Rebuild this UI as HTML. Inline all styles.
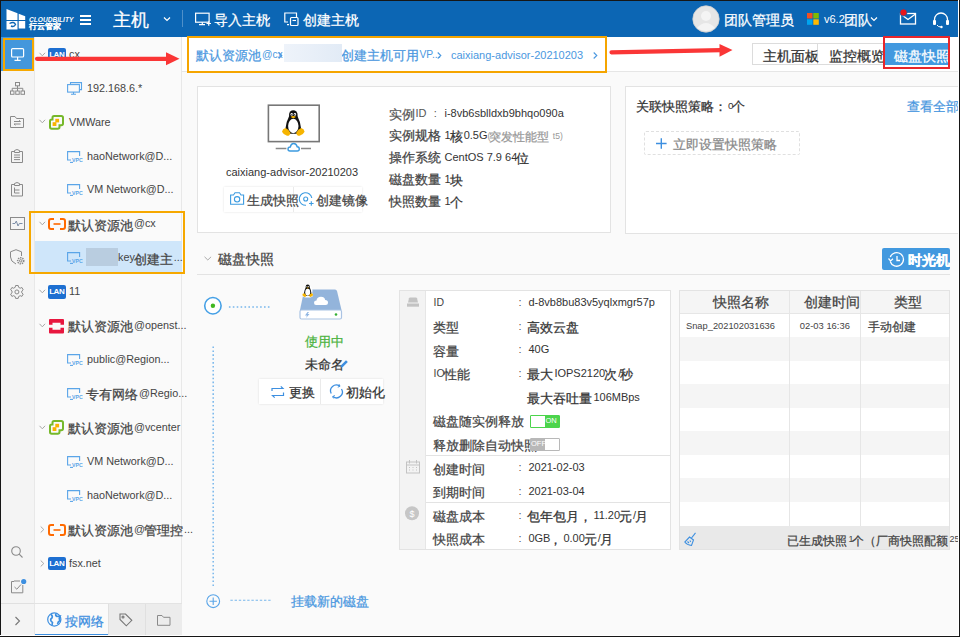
<!DOCTYPE html>
<html><head><meta charset="utf-8"><style>
*{box-sizing:border-box;margin:0;padding:0}
html,body{width:960px;height:637px;overflow:hidden}
body{position:relative;background:#fafafa;font-family:"Liberation Sans",sans-serif;color:#333;font-size:12px}
.a{position:absolute;white-space:nowrap}
.t{line-height:16px;height:16px}
svg{position:absolute;overflow:visible}
.hw{color:#fff;font-size:11px;--cf:14px}
.tr{font-size:10.8px;color:#444;line-height:16px;height:16px}
.lan{position:absolute;width:17.5px;height:13.5px;background:#1d6fd1;border-radius:2px;color:#fff;font-size:8px;font-weight:bold;line-height:13.5px;text-align:center;letter-spacing:-0.4px}
.c{font-size:var(--cf,13px);-webkit-text-stroke:0.25px currentColor;position:relative;top:2.3px;left:-1px;line-height:0}
.card{position:absolute;background:#fff;border:1px solid #e3e3e3}
.lbl{font-size:11px;color:#555;line-height:16px;height:16px}
.val{font-size:11px;color:#333;line-height:16px;height:16px}
</style></head><body>
<div class="a" style="left:0;top:0;width:960px;height:37px;background:#0c66b4"></div>
<svg style="left:0;top:0" width="80" height="37">
 <polygon points="6.5,9 17.5,13.2 17.5,20 6.5,20" fill="#fff"/>
 <polygon points="18.7,13.8 25.2,16.3 25.2,20 18.7,20" fill="#fff"/>
 <rect x="6.5" y="21" width="11" height="8.5" fill="#fff"/>
 <rect x="18.7" y="21" width="6.5" height="7.5" fill="#fff"/>
 <path d="M9.5,23.5 Q14,21 15.5,24.5 Q14,27.5 11,26" stroke="#0c66b4" stroke-width="1.4" fill="none"/>
 <text x="29" y="21.6" font-family="Liberation Sans" font-weight="bold" font-style="italic" font-size="6.6" fill="#fff" letter-spacing="0">CLOUDBILITY</text>
 <text x="28.6" y="28.6" font-family="Liberation Sans" font-size="8" fill="#fff" stroke="#fff" stroke-width="0.5">行云管家</text>
</svg>
<div class="a" style="left:80px;top:15px;width:11px;height:2px;background:#fff"></div>
<div class="a" style="left:80px;top:19px;width:11px;height:2px;background:#fff"></div>
<div class="a" style="left:80px;top:23px;width:11px;height:2px;background:#fff"></div>
<div class="a" style="left:114px;top:11px;height:18px;line-height:18px;font-size:13.5px;color:#fff;--cf:18px"><span class="c">主机</span></div>
<svg style="left:163px;top:16px" width="8" height="6"><path d="M1,1.5 L4,4.5 L7,1.5" stroke="#fff" stroke-width="1.2" fill="none"/></svg>
<div class="a" style="left:182px;top:10px;width:1px;height:17px;background:rgba(255,255,255,0.28)"></div>
<svg style="left:195px;top:12px" width="17" height="14"><rect x="0.6" y="1.2" width="13.5" height="9" fill="none" stroke="#fff" stroke-width="1.2"/><path d="M4,12.6 H10 M7.3,10.2 V12.6" stroke="#fff" stroke-width="1.2"/><path d="M11.5,11.5 H16 M13.75,9.25 V13.75" stroke="#fff" stroke-width="1.2"/></svg>
<div class="a hw t" style="left:215px;top:11px"><span class="c">导入主机</span></div>
<svg style="left:263px;top:16px" width="8" height="6"><path d="M1,1.5 L4,4.5 L7,1.5" stroke="#fff" stroke-width="1.2" fill="none"/></svg>
<svg style="left:284px;top:12px" width="16" height="14"><path d="M12.5,5 V1 H0.8 V10 H4" fill="none" stroke="#fff" stroke-width="1.2"/><path d="M3,12.6 H5" stroke="#fff" stroke-width="1.2"/><rect x="6.5" y="5.5" width="7.5" height="8" rx="1" fill="none" stroke="#fff" stroke-width="1.2"/><path d="M8.5,8.5 H12" stroke="#fff" stroke-width="1.1"/></svg>
<div class="a hw t" style="left:304px;top:11px"><span class="c">创建主机</span></div>
<svg style="left:351px;top:16px" width="8" height="6"><path d="M1,1.5 L4,4.5 L7,1.5" stroke="#fff" stroke-width="1.2" fill="none"/></svg>
<svg style="left:692px;top:5px" width="28" height="28"><circle cx="14" cy="14" r="13.2" fill="#e6e6e6" stroke="#d0d0d0" stroke-width="0.8"/><circle cx="14" cy="11" r="5" fill="#f4f4f4"/><path d="M5,23 Q14,13 23,23 Q14,29 5,23Z" fill="#f4f4f4"/></svg>
<div class="a hw t" style="left:725px;top:11px"><span class="c">团队管理员</span></div>
<svg style="left:785px;top:16px" width="8" height="6"><path d="M1,1.5 L4,4.5 L7,1.5" stroke="#fff" stroke-width="1.2" fill="none"/></svg>
<svg style="left:807px;top:13px" width="12" height="12"><rect x="0" y="0" width="5.5" height="5.5" fill="#f25022"/><rect x="6.3" y="0" width="5.5" height="5.5" fill="#7fba00"/><rect x="0" y="6.3" width="5.5" height="5.5" fill="#00a4ef"/><rect x="6.3" y="6.3" width="5.5" height="5.5" fill="#ffb900"/></svg>
<div class="a hw t" style="left:824px;top:11px">v6.2<span class="c">团队</span></div>
<svg style="left:870px;top:16px" width="8" height="6"><path d="M1,1.5 L4,4.5 L7,1.5" stroke="#fff" stroke-width="1.2" fill="none"/></svg>
<svg style="left:899px;top:8px" width="20" height="18"><rect x="1.5" y="5.5" width="15" height="10.5" fill="none" stroke="#fff" stroke-width="1.3"/><path d="M1.5,6 L9,11.5 L16.5,6" fill="none" stroke="#fff" stroke-width="1.3"/><circle cx="4.5" cy="4.5" r="3.6" fill="#e8141b" stroke="#0c66b4" stroke-width="0.8"/></svg>
<svg style="left:931px;top:11px" width="20" height="18"><path d="M3.5,10 V8.5 A6.5,6.5 0 0 1 16.5,8.5 V10" fill="none" stroke="#fff" stroke-width="1.3"/><rect x="2" y="9" width="3" height="5" rx="1" fill="#fff"/><rect x="15" y="9" width="3" height="5" rx="1" fill="#fff"/><path d="M6,14 Q7,16 10,16" fill="none" stroke="#fff" stroke-width="1"/><circle cx="10.5" cy="16" r="1.2" fill="#fff"/></svg>
<div class="a" style="left:0;top:37px;width:35px;height:600px;background:#f4f4f4;border-right:1px solid #e8e8e8"></div>
<div class="a" style="left:1px;top:37px;width:33px;height:34px;background:#4497dc"></div>
<div class="a" style="left:3px;top:37.5px;width:31px;height:33.5px;border:2.3px solid #f6a800"></div>
<svg style="left:11px;top:48px" width="14" height="14"><rect x="0.6" y="0.6" width="12" height="8.4" rx="1" fill="none" stroke="#fff" stroke-width="1.2"/><path d="M6.6,9 V12 M3.5,12.3 H9.7" stroke="#fff" stroke-width="1.2"/></svg>
<svg style="left:10px;top:82px" width="15" height="14" fill="none" stroke="#8a8a8a" stroke-width="1"><rect x="5.5" y="0.5" width="4" height="3.3"/><path d="M7.5,3.8 V6.3 M2.2,9 V6.3 H12.8 V9 M7.5,6.3 V9"/><rect x="0.5" y="9" width="3.5" height="3.3"/><rect x="5.75" y="9" width="3.5" height="3.3"/><rect x="11" y="9" width="3.5" height="3.3"/></svg>
<svg style="left:10px;top:116px" width="15" height="13" fill="none" stroke="#8a8a8a" stroke-width="1"><path d="M0.5,0.5 H5 L6.5,2.5 H13.5 V11.5 H0.5 Z"/><path d="M4,5.5 H10.5 L9,4.3 M10.5,8 H4 L5.5,9.2"/></svg>
<svg style="left:11px;top:149px" width="13" height="15" fill="none" stroke="#8a8a8a" stroke-width="1"><path d="M3.5,2.5 H0.5 V13.5 H11.5 V2.5 H8.5"/><path d="M3.5,3.5 V1.5 Q6,-0.5 8.5,1.5 V3.5 Z"/><path d="M3,6 H9 M3,8.3 H9 M3,10.6 H9"/></svg>
<svg style="left:11px;top:182px" width="13" height="15" fill="none" stroke="#8a8a8a" stroke-width="1"><path d="M3.5,2.5 H0.5 V14 H11.5 V2.5 H8.5"/><path d="M3.5,3.5 V1.5 Q6,-0.5 8.5,1.5 V3.5 Z"/><path d="M3.5,5.5 V11 H8.5 M3.5,8 H8.5"/></svg>
<svg style="left:10px;top:217px" width="15" height="13" fill="none" stroke="#8a8a8a" stroke-width="1"><rect x="0.5" y="0.5" width="14" height="12"/><path d="M2.5,6.5 H5 L6.3,4 L8,9 L9.3,6.5 H12.5" stroke="#7d8fa8"/></svg>
<svg style="left:10px;top:249px" width="15" height="17" fill="none" stroke="#8a8a8a" stroke-width="1"><path d="M6,0.7 L11.5,2.8 V7 M6,0.7 L0.5,2.8 V8 Q0.5,12.5 6,15"/><circle cx="10.7" cy="11.8" r="3" stroke-width="1.6" stroke-dasharray="1.3 0.9"/><circle cx="10.7" cy="11.8" r="1.2"/></svg>
<svg style="left:10px;top:285px" width="14" height="14" fill="none" stroke="#8a8a8a" stroke-width="1"><path d="M5.6,0.5 H8.2 L8.6,2.3 L10.2,3.2 L11.9,2.5 L13.2,4.8 L11.8,6 V7.9 L13.2,9.1 L11.9,11.4 L10.2,10.7 L8.6,11.6 L8.2,13.4 H5.6 L5.2,11.6 L3.6,10.7 L1.9,11.4 L0.6,9.1 L2,7.9 V6 L0.6,4.8 L1.9,2.5 L3.6,3.2 L5.2,2.3 Z"/><circle cx="6.9" cy="6.95" r="2"/></svg>
<svg style="left:11px;top:546px" width="13" height="13" fill="none" stroke="#8a8a8a" stroke-width="1.1"><circle cx="5" cy="5" r="4.3"/><path d="M8.2,8.2 L11.5,11.5"/></svg>
<svg style="left:11px;top:579px" width="15" height="15" fill="none" stroke="#8a8a8a" stroke-width="1"><path d="M3,2.5 H0.5 V13.8 H11.8 V6"/><path d="M3,2 H9" /><path d="M3.5,8 L5.8,10.2 L10,5.5"/><circle cx="12.7" cy="2.5" r="2.6" fill="#3d8fe0" stroke="none"/></svg>
<div class="a" style="left:0;top:603px;width:34px;height:1px;background:#e0e0e0"></div>
<svg style="left:14px;top:616px" width="8" height="10" fill="none" stroke="#777" stroke-width="1.1"><path d="M1.5,1 L5.5,5 L1.5,9"/></svg>
<div class="a" style="left:35px;top:37px;width:147px;height:600px;background:#fafafa;border-right:1px solid #e8e8e8"></div>
<div class="a" style="left:34.5px;top:241px;width:147px;height:31.6px;background:#cfe6fa"></div>
<div class="a" style="left:86.4px;top:248px;width:32px;height:18px;background:#b9cde0"></div>
<div class="a" style="left:28.5px;top:211px;width:156.5px;height:63px;border:2.3px solid #f6a800"></div>
<svg style="left:39px;top:51.5px" width="7" height="5" fill="none" stroke="#a8a8a8" stroke-width="1"><path d="M0.5,0.8 L3.3,3.8 L6.1,0.8"/></svg>
<div class="lan" style="left:48px;top:47.8px">LAN</div>
<div class="a tr" style="left:69px;top:45.7px;">cx</div>
<svg style="left:67px;top:82.2px" width="16" height="13" fill="none" stroke="#5aa5e8" stroke-width="1.1"><path d="M3.5,2.5 V0.6 H14.5 V7.6 H12.5"/><rect x="0.6" y="2.6" width="11.8" height="7.5"/><path d="M6.5,10.1 V12 M4,12.2 H9"/></svg>
<div class="a tr" style="left:87px;top:79.6px;">192.168.6.*</div>
<svg style="left:39px;top:119.4px" width="7" height="5" fill="none" stroke="#a8a8a8" stroke-width="1"><path d="M0.5,0.8 L3.3,3.8 L6.1,0.8"/></svg>
<svg style="left:49px;top:115.1px" width="16" height="15"><path d="M5,1 H12.3 Q14,1 14,2.7 V8.5 Q14,10.2 12.3,10.2 H10.5 V12 Q10.5,13.8 8.8,13.8 H2.7 Q1,13.8 1,12 V6.3 Q1,4.6 2.7,4.6 H3.5 V2.7 Q3.5,1 5,1 Z" fill="none" stroke="#76b82a" stroke-width="2"/><rect x="6.3" y="3.8" width="3.8" height="3.6" fill="#f8b300"/><rect x="3.6" y="7.2" width="3.8" height="3.8" fill="#f8b300"/></svg>
<div class="a tr" style="left:69px;top:113.6px;">VMWare</div>
<svg style="left:67px;top:150.5px" width="16" height="12" fill="none" stroke="#5aa5e8" stroke-width="1.1"><path d="M4,9 H0.6 V0.6 H12.6 V5"/><path d="M3,11.4 H6"/><text x="5" y="10.6" font-family="Liberation Sans" font-size="5.2" fill="#5aa5e8" stroke="none" font-weight="bold">VPC</text></svg>
<div class="a tr" style="left:87px;top:147.5px;">haoNetwork@D...</div>
<svg style="left:67px;top:184.4px" width="16" height="12" fill="none" stroke="#5aa5e8" stroke-width="1.1"><path d="M4,9 H0.6 V0.6 H12.6 V5"/><path d="M3,11.4 H6"/><text x="5" y="10.6" font-family="Liberation Sans" font-size="5.2" fill="#5aa5e8" stroke="none" font-weight="bold">VPC</text></svg>
<div class="a tr" style="left:87px;top:181.4px;">VM Network@D...</div>
<svg style="left:39px;top:221.2px" width="7" height="5" fill="none" stroke="#a8a8a8" stroke-width="1"><path d="M0.5,0.8 L3.3,3.8 L6.1,0.8"/></svg>
<svg style="left:48px;top:218.3px" width="18" height="12" fill="none" stroke="#ff6a00" stroke-width="2"><path d="M6,1 H3 Q1,1 1,3 V9 Q1,11 3,11 H6 M12,1 H15 Q17,1 17,3 V9 Q17,11 15,11 H12"/><path d="M5.5,6 H12.5" stroke-width="1.6"/></svg>
<div class="a tr" style="left:69px;top:215.3px;"><span class="c">默认资源池</span>@cx</div>
<svg style="left:67px;top:252.3px" width="16" height="12" fill="none" stroke="#5aa5e8" stroke-width="1.1"><path d="M4,9 H0.6 V0.6 H12.6 V5"/><path d="M3,11.4 H6"/><text x="5" y="10.6" font-family="Liberation Sans" font-size="5.2" fill="#5aa5e8" stroke="none" font-weight="bold">VPC</text></svg>
<div class="a tr" style="left:87px;top:249.3px;"></div>
<svg style="left:39px;top:289.0px" width="7" height="5" fill="none" stroke="#a8a8a8" stroke-width="1"><path d="M0.5,0.8 L3.3,3.8 L6.1,0.8"/></svg>
<div class="lan" style="left:48px;top:285.3px">LAN</div>
<div class="a tr" style="left:69px;top:283.2px;">11</div>
<svg style="left:39px;top:322.9px" width="7" height="5" fill="none" stroke="#a8a8a8" stroke-width="1"><path d="M0.5,0.8 L3.3,3.8 L6.1,0.8"/></svg>
<svg style="left:49px;top:318.7px" width="15" height="15"><path d="M0,1 Q0,0 1,0 H14 Q15,0 15,1 V5.8 H11.5 V3.8 H3.5 V5.8 H0 Z M0,8.8 H3.5 V10.8 H11.5 V8.8 H15 V13.5 Q15,14.5 14,14.5 H1 Q0,14.5 0,13.5 Z" fill="#e8173f"/></svg>
<div class="a tr" style="left:69px;top:317.1px;"><span class="c">默认资源池</span>@openst...</div>
<svg style="left:67px;top:354.1px" width="16" height="12" fill="none" stroke="#5aa5e8" stroke-width="1.1"><path d="M4,9 H0.6 V0.6 H12.6 V5"/><path d="M3,11.4 H6"/><text x="5" y="10.6" font-family="Liberation Sans" font-size="5.2" fill="#5aa5e8" stroke="none" font-weight="bold">VPC</text></svg>
<div class="a tr" style="left:87px;top:351.1px;">public@Region...</div>
<svg style="left:67px;top:388.0px" width="16" height="12" fill="none" stroke="#5aa5e8" stroke-width="1.1"><path d="M4,9 H0.6 V0.6 H12.6 V5"/><path d="M3,11.4 H6"/><text x="5" y="10.6" font-family="Liberation Sans" font-size="5.2" fill="#5aa5e8" stroke="none" font-weight="bold">VPC</text></svg>
<div class="a tr" style="left:87px;top:385.0px;"><span class="c">专有网络</span>@Regio...</div>
<svg style="left:39px;top:424.7px" width="7" height="5" fill="none" stroke="#a8a8a8" stroke-width="1"><path d="M0.5,0.8 L3.3,3.8 L6.1,0.8"/></svg>
<svg style="left:49px;top:420.4px" width="16" height="15"><path d="M5,1 H12.3 Q14,1 14,2.7 V8.5 Q14,10.2 12.3,10.2 H10.5 V12 Q10.5,13.8 8.8,13.8 H2.7 Q1,13.8 1,12 V6.3 Q1,4.6 2.7,4.6 H3.5 V2.7 Q3.5,1 5,1 Z" fill="none" stroke="#76b82a" stroke-width="2"/><rect x="6.3" y="3.8" width="3.8" height="3.6" fill="#f8b300"/><rect x="3.6" y="7.2" width="3.8" height="3.8" fill="#f8b300"/></svg>
<div class="a tr" style="left:69px;top:418.9px;"><span class="c">默认资源池</span>@vcenter</div>
<svg style="left:67px;top:455.9px" width="16" height="12" fill="none" stroke="#5aa5e8" stroke-width="1.1"><path d="M4,9 H0.6 V0.6 H12.6 V5"/><path d="M3,11.4 H6"/><text x="5" y="10.6" font-family="Liberation Sans" font-size="5.2" fill="#5aa5e8" stroke="none" font-weight="bold">VPC</text></svg>
<div class="a tr" style="left:87px;top:452.9px;">VM Network@D...</div>
<svg style="left:67px;top:489.8px" width="16" height="12" fill="none" stroke="#5aa5e8" stroke-width="1.1"><path d="M4,9 H0.6 V0.6 H12.6 V5"/><path d="M3,11.4 H6"/><text x="5" y="10.6" font-family="Liberation Sans" font-size="5.2" fill="#5aa5e8" stroke="none" font-weight="bold">VPC</text></svg>
<div class="a tr" style="left:87px;top:486.8px;">haoNetwork@D...</div>
<svg style="left:40px;top:526.0px" width="5" height="7" fill="none" stroke="#a8a8a8" stroke-width="1"><path d="M0.7,0.5 L3.8,3.5 L0.7,6.5"/></svg>
<svg style="left:48px;top:523.7px" width="18" height="12" fill="none" stroke="#ff6a00" stroke-width="2"><path d="M6,1 H3 Q1,1 1,3 V9 Q1,11 3,11 H6 M12,1 H15 Q17,1 17,3 V9 Q17,11 15,11 H12"/><path d="M5.5,6 H12.5" stroke-width="1.6"/></svg>
<div class="a tr" style="left:69px;top:520.7px;"><span class="c">默认资源池</span>@<span class="c">管理控</span>...</div>
<svg style="left:40px;top:560.0px" width="5" height="7" fill="none" stroke="#a8a8a8" stroke-width="1"><path d="M0.7,0.5 L3.8,3.5 L0.7,6.5"/></svg>
<div class="lan" style="left:48px;top:556.8px">LAN</div>
<div class="a tr" style="left:69px;top:554.7px;">fsx.net</div>
<div class="a tr" style="left:118px;top:249.3px;">key<span class="c">创建主</span>...</div>
<div class="a" style="left:34px;top:603px;width:148px;height:1px;background:#e3e3e3"></div>
<div class="a" style="left:34.5px;top:604px;width:73.5px;height:32px;background:#fafafa"></div>
<div class="a" style="left:108px;top:604px;width:36.5px;height:32px;background:#ececec;border-left:1px solid #e0e0e0"></div>
<div class="a" style="left:144.5px;top:604px;width:37px;height:32px;background:#ececec;border-left:1px solid #e0e0e0"></div>
<div class="a" style="left:34.5px;top:633.5px;width:73.5px;height:2px;background:#3d8fe0"></div>
<svg style="left:47px;top:612px" width="15" height="15"><circle cx="7.3" cy="7.5" r="6.6" fill="none" stroke="#3d8fe0" stroke-width="1.2"/><path d="M4,2.5 Q6,4 5,6 Q3,7 4,9 L5.5,10.5 L5,13 M9,1.5 Q8,3.5 10,4.5 L13,4 Q11.5,6.5 13,8.5 Q11,9.5 10.5,12" fill="none" stroke="#3d8fe0" stroke-width="1.6"/></svg>
<div class="a" style="left:66px;top:612px;line-height:16px;font-size:11px;color:#3d8fe0"><span class="c">按网络</span></div>
<svg style="left:119px;top:613px" width="14" height="15" fill="none" stroke="#777" stroke-width="1.1"><path d="M1,1 H6.5 L12.8,7.3 L7.3,12.8 L1,6.5 Z"/><circle cx="4" cy="4" r="1"/></svg>
<svg style="left:157px;top:615px" width="14" height="11" fill="none" stroke="#8a8a8a" stroke-width="1"><path d="M0.5,0.5 H5 L6.5,2.3 H13 V10.3 H0.5 Z"/></svg>
<div class="a" style="left:182px;top:37px;width:778px;height:35px;background:#fff;border-bottom:1px solid #e6e6e6"></div>
<div class="a" style="left:186.5px;top:35.5px;width:420px;height:37px;border:2.2px solid #f5a500"></div>
<div class="a tr" style="left:197px;top:47.0px;color:#4b98e0;font-size:10.3px"><span class="c">默认资源池</span>@cx</div>
<svg style="left:277.5px;top:51.5px" width="5" height="7" fill="none" stroke="#4b98e0" stroke-width="1.1"><path d="M0.7,0.5 L3.8,3.5 L0.7,6.5"/></svg>
<div class="a tr" style="left:341.5px;top:46.6px;color:#4b98e0;font-size:10.3px"><span class="c">创建主机可用</span>VP...</div>
<div class="a" style="left:283.6px;top:44.2px;width:58.4px;height:18.3px;background:linear-gradient(90deg,#eef3fa,#e2ebf6)"></div>
<svg style="left:436.5px;top:51.5px" width="5" height="7" fill="none" stroke="#4b98e0" stroke-width="1.1"><path d="M0.7,0.5 L3.8,3.5 L0.7,6.5"/></svg>
<div class="a tr" style="left:451px;top:47.0px;color:#4b98e0;font-size:11px">caixiang-advisor-20210203</div>
<svg style="left:592.5px;top:51.5px" width="5" height="7" fill="none" stroke="#4b98e0" stroke-width="1.1"><path d="M0.7,0.5 L3.8,3.5 L0.7,6.5"/></svg>
<svg style="left:0;top:0" width="960" height="100"><path d="M37,58.8 H168" stroke="#fa3636" stroke-width="4.2" stroke-linecap="round"/><polygon points="166,52.3 179.5,58.8 166,65.2" fill="#fa3636"/><path d="M611.5,52.3 L721,50.1" stroke="#fa3636" stroke-width="4.2" stroke-linecap="round"/><polygon points="719.5,44 732.5,50.1 719.5,56.7" fill="#fa3636"/></svg>
<div class="a" style="left:751.5px;top:43.3px;width:66.5px;height:22.2px;background:#fff;border:1px solid #dcdcdc"></div>
<div class="a" style="left:817.5px;top:43.3px;width:66.5px;height:22.2px;background:#fff;border:1px solid #dcdcdc;border-left:none"></div>
<div class="a" style="left:884px;top:43.3px;width:64.5px;height:22.2px;background:#4299df"></div>
<div class="a tr" style="left:763.5px;top:46.5px;color:#333;font-size:11px;--cf:14px"><span class="c">主机面板</span></div>
<div class="a tr" style="left:829.5px;top:46.5px;color:#333;font-size:11px;--cf:14px"><span class="c">监控概览</span></div>
<div class="a tr" style="left:894.5px;top:46.5px;color:#fff;font-size:11px;--cf:14px"><span class="c">磁盘快照</span></div>
<div class="a" style="left:882.8px;top:35.7px;width:67px;height:33.5px;border:2px solid #e8262b"></div>
<div class="card" style="left:197px;top:86.3px;width:413.5px;height:147px"></div>
<svg style="left:267px;top:103.5px" width="54" height="50">
<rect x="1.4" y="1.2" width="50.8" height="36.4" fill="#fff" stroke="#777" stroke-width="1.6"/>
<path d="M8.7,44.5 H19.4 M34,44.5 H44" stroke="#888" stroke-width="1.3"/>
<path d="M23,47 Q21,47 21,45 Q21,43 23.3,43 Q24,39.5 26.6,39.5 Q29.5,39.5 30.2,42.8 Q32.3,43 32.3,45 Q32.3,47 30.3,47 Z" fill="#fff" stroke="#3d9be0" stroke-width="1.4"/>
<g transform="translate(15,6.2)"><path d="M7.3,5.5 Q4.2,11.5 3.6,17.5 Q3.6,22.5 6.5,23.5 L16.1,23.5 Q19,22.5 19,17.5 Q18.4,11.5 15.3,5.5 Z" fill="#111"/>
 <ellipse cx="11.3" cy="4.7" rx="4.3" ry="4.7" fill="#111"/>
 <ellipse cx="11.3" cy="15.8" rx="5.2" ry="7.2" fill="#fff"/>
 <ellipse cx="9.7" cy="4.2" rx="1.2" ry="1.4" fill="#fff"/><ellipse cx="12.9" cy="4.2" rx="1.2" ry="1.4" fill="#fff"/>
 <circle cx="9.9" cy="4.5" r="0.6" fill="#111"/><circle cx="12.7" cy="4.5" r="0.6" fill="#111"/>
 <path d="M8.6,6.6 Q11.3,5.2 14,6.6 Q11.3,9.3 8.6,6.6Z" fill="#f6b400"/>
 <path d="M0,21.5 Q0.5,18.5 3.5,17.8 Q6.5,19 8.5,22.5 Q8,25.8 5,25.6 Q1,24 0,21.5Z" fill="#f6b400"/>
 <path d="M22.6,21.5 Q22.1,18.5 19.1,17.8 Q16.1,19 14.1,22.5 Q14.6,25.8 17.6,25.6 Q21.6,24 22.6,21.5Z" fill="#f6b400"/></g>
</svg>
<div class="a tr" style="left:226px;top:163.7px;color:#333;font-size:11px">caixiang-advisor-20210203</div>
<div class="a" style="left:224px;top:186.8px;width:138px;height:25.2px;background:#fff;box-shadow:0 0 2px rgba(0,0,0,0.12)"></div>
<div class="a" style="left:292.5px;top:187px;width:1px;height:25px;background:#eaeaea"></div>
<svg style="left:229.5px;top:192px" width="15" height="13" fill="none" stroke="#3d9be0" stroke-width="1.1"><path d="M0.6,3 H3.5 L5,0.8 H9.5 L11,3 H13.6 V12.2 H0.6 Z"/><circle cx="7.1" cy="7.3" r="2.7"/></svg>
<div class="a tr" style="left:248.3px;top:191.5px;color:#444;font-size:10px"><span class="c">生成快照</span></div>
<svg style="left:298.5px;top:192px" width="16" height="15" fill="none" stroke="#3d9be0" stroke-width="1.1"><path d="M12.8,6 A6.3,6.3 0 1 0 7,13.3"/><circle cx="6.7" cy="7" r="2"/><path d="M10,11.5 H14.6 M12.3,9.2 V13.8"/></svg>
<div class="a tr" style="left:317px;top:191.5px;color:#444;font-size:10px"><span class="c">创建镜像</span></div>
<div class="a lbl" style="left:389.5px;top:105.0px;font-size:11px;color:#555"><span class="c">实例</span>ID</div>
<div class="a lbl" style="left:433.8px;top:105.0px;font-size:11px;color:#555">:</div>
<div class="a val" style="left:444.5px;top:105.0px;font-size:11px;color:#333">i-8vb6sblldxb9bhqo090a</div>
<div class="a lbl" style="left:389.5px;top:126.9px;font-size:10.3px;color:#444"><span class="c">实例规格</span></div>
<div class="a lbl" style="left:433.8px;top:126.9px;font-size:11px;color:#555">:</div>
<div class="a val" style="left:444.5px;top:126.9px;font-size:11px;color:#333">1<span class="c">核</span>0.5G<span style="font-size:8.6px;color:#999;--cf:12px">(<span class="c">突发性能型</span> t5)</span></div>
<div class="a lbl" style="left:389.5px;top:148.9px;font-size:10.3px;color:#444"><span class="c">操作系统</span></div>
<div class="a lbl" style="left:433.8px;top:148.9px;font-size:11px;color:#555">:</div>
<div class="a val" style="left:444.5px;top:148.9px;font-size:11px;color:#333">CentOS 7.9 64<span class="c">位</span></div>
<div class="a lbl" style="left:389.5px;top:170.8px;font-size:10.3px;color:#444"><span class="c">磁盘数量</span></div>
<div class="a lbl" style="left:433.8px;top:170.8px;font-size:11px;color:#555">:</div>
<div class="a val" style="left:444.5px;top:170.8px;font-size:11px;color:#333">1<span class="c">块</span></div>
<div class="a lbl" style="left:389.5px;top:192.8px;font-size:10.3px;color:#444"><span class="c">快照数量</span></div>
<div class="a lbl" style="left:433.8px;top:192.8px;font-size:11px;color:#555">:</div>
<div class="a val" style="left:444.5px;top:192.8px;font-size:11px;color:#333">1<span class="c">个</span></div>
<div class="card" style="left:625.3px;top:86.4px;width:335px;height:147.6px"></div>
<div class="a tr" style="left:637px;top:97.5px;color:#333;font-size:9.85px"><span class="c">关联快照策略：</span>0<span class="c">个</span></div>
<div class="a tr" style="left:907.5px;top:97.5px;color:#4b98e0;font-size:10.3px"><span class="c">查看全部</span></div>
<div class="a" style="left:644px;top:131.3px;width:155.5px;height:23.7px;border:1px dashed #e0e0e0;border-radius:2px"></div>
<svg style="left:656px;top:138px" width="12" height="12" stroke="#3d8fe0" stroke-width="1.4"><path d="M5.3,0.3 V10.8 M0,5.5 H10.6"/></svg>
<div class="a tr" style="left:674px;top:135.7px;color:#888;font-size:9.9px"><span class="c">立即设置快照策略</span></div>
<svg style="left:204px;top:256px" width="8" height="5" fill="none" stroke="#aaa" stroke-width="1"><path d="M0.5,0.8 L3.8,4 L7.1,0.8"/></svg>
<div class="a tr" style="left:218.7px;top:250.0px;color:#444;font-size:10.5px;--cf:14px"><span class="c">磁盘快照</span></div>
<div class="a" style="left:197px;top:274px;width:753px;height:1px;background:#e3e3e3"></div>
<div class="a" style="left:882px;top:247.7px;width:67.7px;height:22px;background:#4299df;border-radius:2px"></div>
<svg style="left:888px;top:251.5px" width="17" height="15" fill="none" stroke="#fff" stroke-width="1.3"><path d="M2.3,5 A6.8,6.8 0 1 1 2.2,9.5"/><path d="M0.5,6.5 L2.6,9 L5,6.8" stroke-width="1.2"/><path d="M9,4 V8.5 H12"/></svg>
<div class="a tr" style="left:908.5px;top:250.7px;color:#fff;font-size:10.8px;font-weight:bold;--cf:14px"><span class="c">时光机</span></div>
<svg style="left:203px;top:296px" width="20" height="20"><circle cx="9.9" cy="9.75" r="8.2" fill="#fff" stroke="#45a0e6" stroke-width="1.6"/><circle cx="9.9" cy="9.75" r="2.2" fill="#3fb71f"/></svg>
<svg style="left:0;top:0" width="300" height="620"><path d="M228.9,307 H271" stroke="#78b7ec" stroke-width="1.6" stroke-dasharray="1.6 2.3"/><path d="M213.2,346.5 V586" stroke="#78b7ec" stroke-width="1.5" stroke-dasharray="1.6 2.3"/><path d="M230.4,600.3 H271" stroke="#78b7ec" stroke-width="1.1" stroke-dasharray="2.4 1.8"/></svg>
<svg style="left:299px;top:284px" width="45" height="37">
<path d="M7,5.5 H36 Q37.5,5.5 38,7 L42.5,26 H1 L5,7 Q5.5,5.5 7,5.5Z" fill="#93b4db"/>
<rect x="1" y="26" width="41.5" height="9" rx="1.5" fill="#fff" stroke="#aac3e3" stroke-width="1.2"/>
<path d="M17,21 Q15,21 15,18.8 Q15,16.5 17.5,16.5 Q18,12.8 22,12.8 Q25.5,12.8 26.2,16 Q29,16 29,18.5 Q29,21 26.5,21 Z" fill="#fff"/>
<path d="M8.5,28 L6,31.5 H8 L7,34 L10.5,30 H8.5 L10,28 Z" fill="#8db4e2"/>
<circle cx="37" cy="30.5" r="1.3" fill="#35b034"/>
<g transform="translate(3.3,0.6) scale(0.48)"><ellipse cx="11.3" cy="13" rx="10" ry="12" fill="#fff"/><path d="M0,21.5 Q0,16 11.3,16 Q22.6,16 22.6,21.5 Q22,27 11.3,27 Q0.6,27 0,21.5Z" fill="#fff"/><path d="M7.3,5.5 Q4.2,11.5 3.6,17.5 Q3.6,22.5 6.5,23.5 L16.1,23.5 Q19,22.5 19,17.5 Q18.4,11.5 15.3,5.5 Z" fill="#111"/>
 <ellipse cx="11.3" cy="4.7" rx="4.3" ry="4.7" fill="#111"/>
 <ellipse cx="11.3" cy="15.8" rx="5.2" ry="7.2" fill="#fff"/>
 <ellipse cx="9.7" cy="4.2" rx="1.2" ry="1.4" fill="#fff"/><ellipse cx="12.9" cy="4.2" rx="1.2" ry="1.4" fill="#fff"/>
 <circle cx="9.9" cy="4.5" r="0.6" fill="#111"/><circle cx="12.7" cy="4.5" r="0.6" fill="#111"/>
 <path d="M8.6,6.6 Q11.3,5.2 14,6.6 Q11.3,9.3 8.6,6.6Z" fill="#f6b400"/>
 <path d="M0,21.5 Q0.5,18.5 3.5,17.8 Q6.5,19 8.5,22.5 Q8,25.8 5,25.6 Q1,24 0,21.5Z" fill="#f6b400"/>
 <path d="M22.6,21.5 Q22.1,18.5 19.1,17.8 Q16.1,19 14.1,22.5 Q14.6,25.8 17.6,25.6 Q21.6,24 22.6,21.5Z" fill="#f6b400"/></g>
</svg>
<div class="a tr" style="left:306px;top:333.0px;color:#4cb33f;font-size:10.3px"><span class="c">使用中</span></div>
<div class="a tr" style="left:306px;top:356.0px;color:#333;font-size:10.3px"><span class="c">未命名</span></div>
<svg style="left:339.5px;top:358.5px" width="9" height="9"><path d="M0.5,8.5 L1,6.2 L6,1.2 L7.8,3 L2.8,8 Z" fill="#3d8fe0"/></svg>
<div class="a" style="left:259.2px;top:378.7px;width:124.2px;height:25.5px;background:#fff;box-shadow:0 0 2px rgba(0,0,0,0.12)"></div>
<div class="a" style="left:320.3px;top:379px;width:1px;height:25px;background:#eaeaea"></div>
<svg style="left:270.5px;top:384.5px" width="14" height="14" fill="none" stroke="#3d8fe0" stroke-width="1.2"><path d="M1,6 V3.5 H12 L9.8,1.3 M12.5,7.5 V10.5 H1.5 L3.7,12.7"/></svg>
<div class="a tr" style="left:289.5px;top:383.5px;color:#333;font-size:10.3px"><span class="c">更换</span></div>
<svg style="left:328.5px;top:384px" width="15" height="15" fill="none" stroke="#3d8fe0" stroke-width="1.3"><path d="M2.2,9.5 A5.8,5.8 0 0 1 10.5,2"/><path d="M12.5,5 A5.8,5.8 0 0 1 4,12.6"/><path d="M10,0.2 L11,2.2 L8.8,3.2 M4.6,14.4 L3.6,12.6 L5.8,11.5" stroke-width="1"/></svg>
<div class="a tr" style="left:346.6px;top:383.5px;color:#333;font-size:10px"><span class="c">初始化</span></div>
<svg style="left:206px;top:594px" width="15" height="15" fill="none" stroke="#5aa5e8" stroke-width="1.1"><circle cx="7.2" cy="7.2" r="6.4"/><path d="M7.2,3.5 V10.9 M3.5,7.2 H10.9"/></svg>
<div class="a tr" style="left:292px;top:593.0px;color:#4b98e0;font-size:10px"><span class="c">挂载新的磁盘</span></div>
<div class="a" style="left:399px;top:290px;width:271.5px;height:260px;background:#fff;border:1px solid #e3e3e3"></div>
<div class="a" style="left:400px;top:291px;width:26px;height:258px;background:#f3f3f3;border-right:1px solid #e6e6e6"></div>
<div class="a" style="left:426px;top:455px;width:244px;height:1px;background:#e3e3e3"></div>
<div class="a" style="left:426px;top:502px;width:244px;height:1px;background:#e3e3e3"></div>
<svg style="left:405.5px;top:297px" width="15" height="11"><path d="M2,5.5 L3,1.2 Q3.2,0.5 4,0.5 H10 Q10.8,0.5 11,1.2 L12,5.5 Z" fill="#c3c3c3"/><rect x="1" y="6.5" width="12" height="3.2" fill="#c3c3c3"/></svg>
<svg style="left:405.5px;top:460px" width="15" height="15" fill="none" stroke="#c3c3c3" stroke-width="1"><rect x="0.5" y="2" width="13" height="11"/><path d="M3.5,0 V3.5 M10.5,0 V3.5 M0.5,5 H13.5" /><path d="M3,7.5 H4 M6.5,7.5 H7.5 M10,7.5 H11 M3,10 H4 M6.5,10 H7.5 M10,10 H11" stroke-width="1.1"/></svg>
<svg style="left:405px;top:506px" width="15" height="15"><circle cx="7" cy="7.3" r="7" fill="#c6c6c6"/><text x="7" y="10.5" text-anchor="middle" font-family="Liberation Sans" font-size="9" fill="#fff">$</text></svg>
<div class="a lbl" style="left:433.5px;top:294.0px;font-size:10.5px;color:#444">ID</div>
<div class="a lbl" style="left:518.5px;top:294.0px;font-size:11px;color:#555">:</div>
<div class="a val" style="left:528.4px;top:294.0px;font-size:11px;color:#333">d-8vb8bu83v5yqlxmgr57p</div>
<div class="a lbl" style="left:433.5px;top:317.7px;font-size:10.5px;color:#444"><span class="c">类型</span></div>
<div class="a lbl" style="left:518.5px;top:317.7px;font-size:11px;color:#555">:</div>
<div class="a val" style="left:528.4px;top:317.7px;font-size:11px;color:#333"><span class="c">高效云盘</span></div>
<div class="a lbl" style="left:433.5px;top:341.4px;font-size:10.5px;color:#444"><span class="c">容量</span></div>
<div class="a lbl" style="left:518.5px;top:341.4px;font-size:11px;color:#555">:</div>
<div class="a val" style="left:528.4px;top:341.4px;font-size:11px;color:#333">40G</div>
<div class="a lbl" style="left:433.5px;top:365.1px;font-size:10.5px;color:#444">IO<span class="c">性能</span></div>
<div class="a lbl" style="left:518.5px;top:365.1px;font-size:11px;color:#555">:</div>
<div class="a val" style="left:528.4px;top:365.1px;font-size:11px;color:#333"><span class="c">最大</span>IOPS2120<span class="c">次</span>/<span class="c">秒</span></div>
<div class="a val" style="left:528.4px;top:388.8px;font-size:11px;color:#333"><span class="c">最大吞吐量</span>106MBps</div>
<div class="a lbl" style="left:433.5px;top:413.0px;font-size:10.1px;color:#444"><span class="c">磁盘随实例释放</span></div>
<div class="a lbl" style="left:518.5px;top:413.0px;font-size:11px;color:#555">:</div>
<div class="a lbl" style="left:433.5px;top:436.6px;font-size:10.1px;color:#444"><span class="c">释放删除自动快照</span></div>
<div class="a lbl" style="left:518.5px;top:436.6px;font-size:11px;color:#555">:</div>
<div class="a lbl" style="left:433.5px;top:459.4px;font-size:10.5px;color:#444"><span class="c">创建时间</span></div>
<div class="a lbl" style="left:518.5px;top:459.4px;font-size:11px;color:#555">:</div>
<div class="a val" style="left:528.4px;top:459.4px;font-size:11px;color:#333">2021-02-03</div>
<div class="a lbl" style="left:433.5px;top:483.0px;font-size:10.5px;color:#444"><span class="c">到期时间</span></div>
<div class="a lbl" style="left:518.5px;top:483.0px;font-size:11px;color:#555">:</div>
<div class="a val" style="left:528.4px;top:483.0px;font-size:11px;color:#333">2021-03-04</div>
<div class="a lbl" style="left:433.5px;top:506.5px;font-size:10.5px;color:#444"><span class="c">磁盘成本</span></div>
<div class="a lbl" style="left:518.5px;top:506.5px;font-size:11px;color:#555">:</div>
<div class="a val" style="left:528.4px;top:506.5px;font-size:11px;color:#333"><span class="c">包年包月，</span>11.20<span class="c">元</span>/<span class="c">月</span></div>
<div class="a lbl" style="left:433.5px;top:530.0px;font-size:10.5px;color:#444"><span class="c">快照成本</span></div>
<div class="a lbl" style="left:518.5px;top:530.0px;font-size:11px;color:#555">:</div>
<div class="a val" style="left:528.4px;top:530.0px;font-size:11px;color:#333">0GB<span class="c">，</span>0.00<span class="c">元</span>/<span class="c">月</span></div>
<div class="a" style="left:530px;top:415px;width:29.5px;height:12.5px;background:#4cd44c;border:1px solid #4cd44c;border-radius:1px"></div>
<div class="a" style="left:531px;top:416px;width:14px;height:10.5px;background:#fff"></div>
<div class="a" style="left:545.5px;top:415px;line-height:12.5px;font-size:7.5px;color:#fff">ON</div>
<div class="a" style="left:530px;top:438.3px;width:29.5px;height:12.5px;background:#b8b8b8;border:1px solid #b8b8b8;border-radius:1px"></div>
<div class="a" style="left:545px;top:439.3px;width:13.5px;height:10.5px;background:#fff"></div>
<div class="a" style="left:531px;top:438.3px;line-height:12.5px;font-size:7.5px;color:#fff">OFF</div>
<div class="a" style="left:678.5px;top:290px;width:271px;height:260px;background:#fff;border:1px solid #e3e3e3"></div>
<div class="a" style="left:679.5px;top:291px;width:269px;height:22.5px;background:#f5f5f5;border-bottom:1px solid #e6e6e6"></div>
<div class="a" style="left:679.5px;top:337.0px;width:269px;height:23.5px;background:#f5f5f5"></div>
<div class="a" style="left:679.5px;top:384.0px;width:269px;height:23.5px;background:#f5f5f5"></div>
<div class="a" style="left:679.5px;top:431.0px;width:269px;height:23.5px;background:#f5f5f5"></div>
<div class="a" style="left:679.5px;top:478.0px;width:269px;height:23.5px;background:#f5f5f5"></div>
<div class="a" style="left:788.5px;top:291px;width:1px;height:235px;background:#e6e6e6"></div>
<div class="a" style="left:860.3px;top:291px;width:1px;height:235px;background:#e6e6e6"></div>
<div class="a" style="left:679.5px;top:526.2px;width:269px;height:23px;background:#e9e9e9"></div>
<div class="a tr" style="left:713.6px;top:294.0px;color:#444;font-size:10.2px;--cf:14px"><span class="c">快照名称</span></div>
<div class="a tr" style="left:804.5px;top:294.0px;color:#444;font-size:10.2px;--cf:14px"><span class="c">创建时间</span></div>
<div class="a tr" style="left:895px;top:294.0px;color:#444;font-size:10.2px;--cf:14px"><span class="c">类型</span></div>
<div class="a tr" style="left:686px;top:318.0px;color:#444;font-size:9.3px">Snap_202102031636</div>
<div class="a tr" style="left:799.8px;top:318.0px;color:#444;font-size:9.4px">02-03 16:36</div>
<div class="a tr" style="left:868.5px;top:318.0px;color:#444;font-size:9.2px;--cf:12px"><span class="c">手动创建</span></div>
<svg style="left:683.5px;top:531.5px" width="13" height="15" fill="none" stroke="#3d8fe0" stroke-width="1.1"><path d="M11.5,0.8 L7.5,6"/><path d="M5.5,5 L9.5,8 L7.5,13.5 Q3,13 0.8,10 Z"/><path d="M3.5,9.5 L5,11 M5.8,8.5 L6.8,9.8"/></svg>
<div class="a tr" style="left:788.4px;top:531.4px;color:#444;font-size:9px;--cf:12px"><span class="c">已生成快照</span>1<span class="c">个（厂商快照配额</span>256<span class="c">个）</span></div>

<div class="a" style="left:0;top:0;width:960px;height:1px;background:#161616"></div><div class="a" style="left:0;top:0;width:1.3px;height:637px;background:#161616"></div><div class="a" style="left:958px;top:0;width:1px;height:637px;background:#fff"></div><div class="a" style="left:959px;top:0;width:1px;height:637px;background:#161616"></div><div class="a" style="left:0;top:635px;width:959px;height:1px;background:#fff"></div><div class="a" style="left:0;top:636px;width:960px;height:1px;background:#161616"></div>
</body></html>
